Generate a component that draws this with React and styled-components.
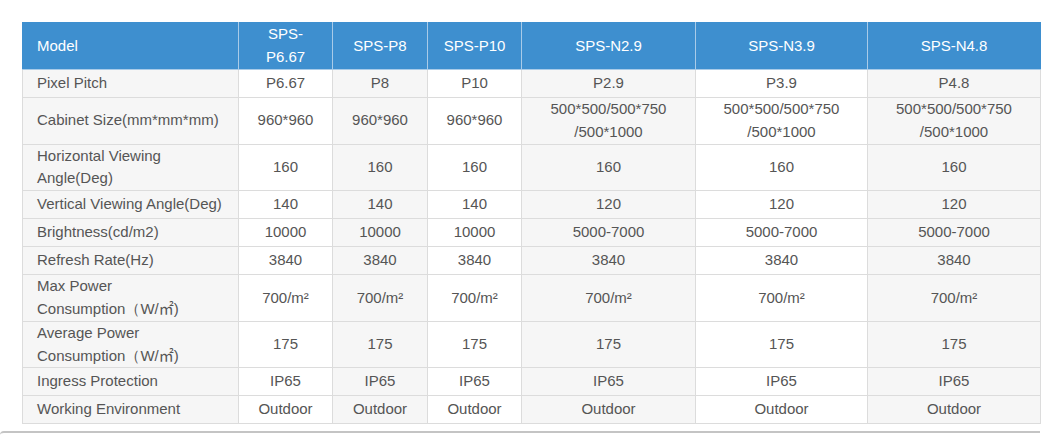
import React from 'react'
import styled, { createGlobalStyle } from 'styled-components'

const GlobalStyle = createGlobalStyle`
  html, body {
    margin: 0;
    padding: 0;
    background: #fff;
  }
  body {
    font-family: "Liberation Sans", Arial, Helvetica, sans-serif;
  }
`

const Page = styled.div`
  width: 1059px;
  height: 435px;
  padding: 22px 0 0 22px;
  box-sizing: border-box;
  overflow: hidden;
`

const SpecTable = styled.table`
  width: 1018px;
  border-collapse: collapse;
  table-layout: fixed;
  font-size: 15px;
  line-height: 22.8px;
  color: #555;
`

const HeadCell = styled.th`
  background: #3e8fcf;
  color: #fff;
  font-weight: normal;
  height: 46px;
  padding: 0;
  border: 1px solid #a9cbe8;
  border-top-color: #3e8fcf;
  text-align: ${p => (p.$first ? 'left' : 'center')};
  padding-left: ${p => (p.$first ? '14px' : '0')};
  &:first-child { border-left-color: #3e8fcf; }
  &:last-child { border-right-color: #3e8fcf; }
`

const Cell = styled.td`
  height: 27px;
  padding: 0;
  border: 1px solid #dcdcdc;
  background: ${p => (p.$shade ? '#f6f6f6' : '#fff')};
  text-align: ${p => (p.$first ? 'left' : 'center')};
  padding-left: ${p => (p.$first ? '14px' : '0')};
  vertical-align: middle;
`

const SqM = styled.span`
  font-family: "Noto Sans CJK SC", "Liberation Sans", sans-serif;
  font-size: 15px;
  line-height: 0;
`

const BottomEdge = styled.div`
  margin-top: 7px;
  margin-left: -22px;
  width: 1040px;
  height: 3px;
  border-top: 2px solid #c4c4c4;
  border-radius: 4px 0 0 0;
`

const widths = [216, 94, 95, 94, 174, 172, 173]
const models = ['SPS-\nP6.67', 'SPS-P8', 'SPS-P10', 'SPS-N2.9', 'SPS-N3.9', 'SPS-N4.8']

const sizes = '500*500/500*750\n/500*1000'
const power = <>Consumption（W/<SqM>㎡</SqM>)</>

const rows = [
  ['Pixel Pitch', 'P6.67', 'P8', 'P10', 'P2.9', 'P3.9', 'P4.8'],
  ['Cabinet Size(mm*mm*mm)', '960*960', '960*960', '960*960', sizes, sizes, sizes],
  ['Horizontal Viewing\nAngle(Deg)', '160', '160', '160', '160', '160', '160'],
  ['Vertical Viewing Angle(Deg)', '140', '140', '140', '120', '120', '120'],
  ['Brightness(cd/m2)', '10000', '10000', '10000', '5000-7000', '5000-7000', '5000-7000'],
  ['Refresh Rate(Hz)', '3840', '3840', '3840', '3840', '3840', '3840'],
  [<>Max Power<br />{power}</>, '700/m²', '700/m²', '700/m²', '700/m²', '700/m²', '700/m²'],
  [<>Average Power<br />{power}</>, '175', '175', '175', '175', '175', '175'],
  ['Ingress Protection', 'IP65', 'IP65', 'IP65', 'IP65', 'IP65', 'IP65'],
  ['Working Environment', 'Outdoor', 'Outdoor', 'Outdoor', 'Outdoor', 'Outdoor', 'Outdoor'],
]

function Lines({ text }) {
  if (typeof text !== 'string') return text
  const parts = text.split('\n')
  return parts.map((p, i) => (
    <React.Fragment key={i}>
      {p}
      {i < parts.length - 1 && <br />}
    </React.Fragment>
  ))
}

export default function App() {
  return (
    <Page>
      <GlobalStyle />
      <SpecTable>
        <colgroup>
          {widths.map((w, i) => <col key={i} style={{ width: w }} />)}
        </colgroup>
        <thead>
          <tr>
            <HeadCell $first>Model</HeadCell>
            {models.map(m => (
              <HeadCell key={m}><Lines text={m} /></HeadCell>
            ))}
          </tr>
        </thead>
        <tbody>
          {rows.map((row, r) => (
            <tr key={r}>
              {row.map((v, c) => (
                <Cell key={c} $first={c === 0} $shade={c % 2 === 0}>
                  <Lines text={v} />
                </Cell>
              ))}
            </tr>
          ))}
        </tbody>
      </SpecTable>
      <BottomEdge />
    </Page>
  )
}
